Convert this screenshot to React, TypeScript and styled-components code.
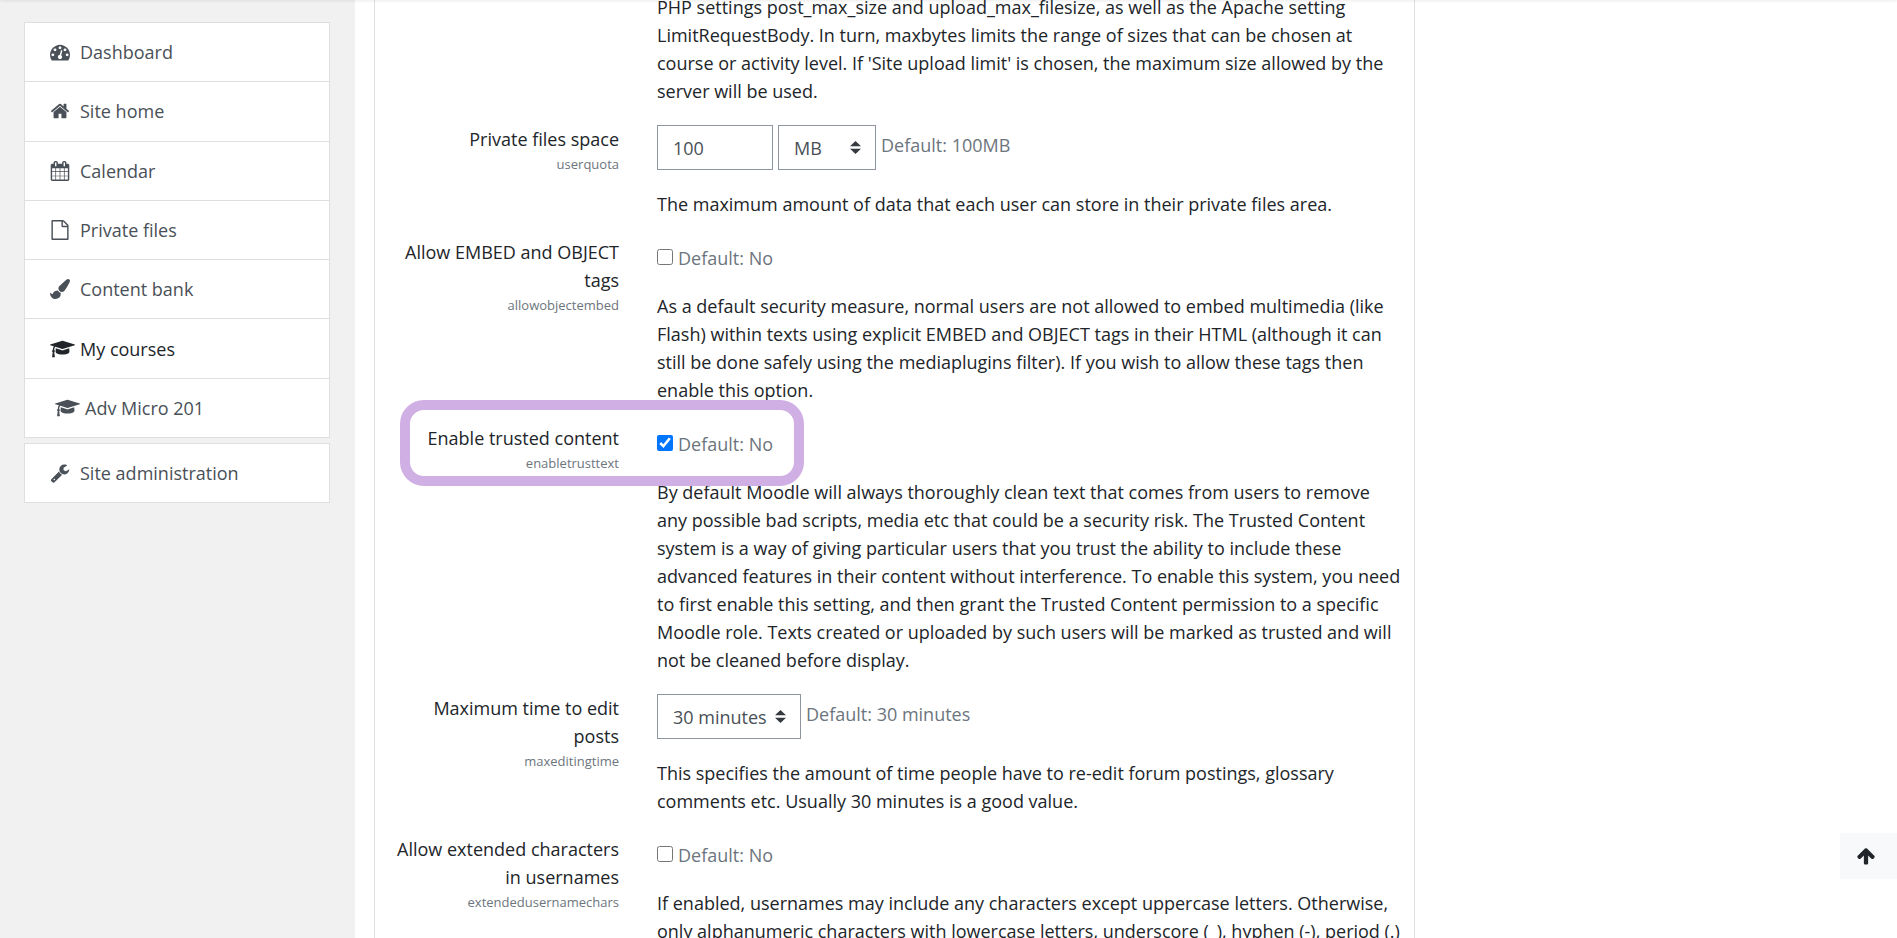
import React from "react";
import styled, { createGlobalStyle, css } from "styled-components";

const GlobalStyle = createGlobalStyle`
  *, *::before, *::after { box-sizing: border-box; }
  html, body { margin: 0; height: 100%; overflow: hidden; }
  body {
    background: #fff;
    color: #212529;
    font: 400 18px/28px "Open Sans", "Noto Sans", sans-serif;
  }
  p { margin: 0; }
`;

const Navbar = styled.header`
  position: fixed;
  z-index: 10;
  left: 0;
  right: 0;
  bottom: 100%;
  height: 60px;
  background: #fff;
  box-shadow: 0 1px 3px rgba(0, 0, 0, 0.08);
`;

const Page = styled.div`
  display: flex;
  height: 100vh;
  overflow: hidden;
`;

const Drawer = styled.aside`
  flex: 0 0 355px;
  padding: 22px 25px 0 24px;
  background: #f1f1f1;
`;

const NavList = styled.ul<{ $minHeight?: number }>`
  display: flex;
  flex-direction: column;
  min-height: ${(p) => p.$minHeight ?? 60}px;
  margin: 0 0 5px;
  padding: 0;
  list-style: none;
  background: #fff;
  border: 1px solid #dfdfdf;
`;

const NavItem = styled.li`
  display: flex;
  flex: 1 0 auto;
  & + & { border-top: 1px solid #dfdfdf; }
`;

const NavLink = styled.a<{ $heading?: boolean; $indent?: boolean }>`
  display: flex;
  flex: 1;
  align-items: center;
  padding: 15px 25px;
  padding-left: ${(p) => (p.$indent ? 30 : 25)}px;
  color: ${(p) => (p.$heading ? "#212529" : "#495057")};
  text-decoration: none;
`;

const IconSlot = styled.span`
  display: flex;
  flex: 0 0 25px;
  width: 25px;
  height: 20px;
  margin-right: 5px;
`;

const Main = styled.main`
  flex: 1;
  min-width: 0;
  padding: 0 482px 0 19px;
`;

const Card = styled.form`
  min-height: 100%;
  margin-top: -7px;
  padding: 0 5px 0 22px;
  border: 1px solid #dfdfdf;
  border-width: 0 1px;
`;

const FormRow = styled.div`
  position: relative;
  display: grid;
  grid-template-columns: 222px minmax(0, 1fr);
  column-gap: 38px;
  margin-bottom: 20px;
`;

const LabelCell = styled.div`
  text-align: right;
  white-space: pre;
`;

const Label = styled.label`
  display: block;
`;

const ShortName = styled.span`
  display: block;
  color: #6c757d;
  font-size: 13px;
  line-height: 22px;
`;

const Setting = styled.div`
  display: flex;
  align-items: flex-start;
  gap: 5px;
  min-height: 34px;
  margin-bottom: 20px;
`;

const DefaultInfo = styled.span`
  margin-top: 6px;
  color: #6c757d;
`;

const Description = styled.p`
  white-space: pre;
`;

const control = css`
  height: 45px;
  margin: 0;
  padding: 0 15px;
  color: #495057;
  font: inherit;
  background: #fff;
  border: 1px solid #8f959e;
  border-radius: 0;
`;

const TextInput = styled.input`
  ${control}
  width: 116px;
`;

const SelectWrap = styled.span<{ $width: number }>`
  position: relative;
  display: block;
  width: ${(p) => p.$width}px;
`;

const Select = styled.select`
  ${control}
  width: 100%;
  appearance: none;
`;

const Caret = styled.svg`
  position: absolute;
  top: 16px;
  right: 15px;
  width: 11px;
  height: 13px;
  fill: #343a40;
  pointer-events: none;
`;

const Checkbox = styled.input`
  width: 16px;
  height: 16px;
  margin: 11px 0 0;
  accent-color: #0075ff;
`;

const Highlight = styled.span`
  position: absolute;
  top: -24px;
  left: 3px;
  width: 404px;
  height: 86px;
  border: 10px solid #d0afe4;
  border-radius: 24px;
  pointer-events: none;
`;

const BackToTop = styled.button`
  position: fixed;
  right: 0;
  bottom: 59px;
  display: flex;
  align-items: center;
  justify-content: center;
  width: 57px;
  height: 46px;
  padding: 0 5px 0 0;
  color: #212529;
  background: #f8f9fa;
  border: 0;
`;

const icons = {
  dashboard: "M384 1152q0-53-37.5-90.5t-90.5-37.5-90.5 37.5-37.5 90.5 37.5 90.5 90.5 37.5 90.5-37.5 37.5-90.5zm192-448q0-53-37.5-90.5t-90.5-37.5-90.5 37.5-37.5 90.5 37.5 90.5 90.5 37.5 90.5-37.5 37.5-90.5zm428 481l101-382q6-26-7.5-48.5t-38.5-29.5-48 6.5-30 39.5l-101 382q-60 5-107 43.5t-63 98.5q-20 77 20 146t117 89 146-20 89-117q16-60-6-117t-72-91zm660-33q0-53-37.5-90.5t-90.5-37.5-90.5 37.5-37.5 90.5 37.5 90.5 90.5 37.5 90.5-37.5 37.5-90.5zm-640-640q0-53-37.5-90.5t-90.5-37.5-90.5 37.5-37.5 90.5 37.5 90.5 90.5 37.5 90.5-37.5 37.5-90.5zm448 192q0-53-37.5-90.5t-90.5-37.5-90.5 37.5-37.5 90.5 37.5 90.5 90.5 37.5 90.5-37.5 37.5-90.5zm320 448q0 261-141 483-19 29-54 29h-1402q-35 0-54-29-141-221-141-483 0-182 71-348t191-286 286-191 348-71 348 71 286 191 191 286 71 348z",
  home: "M1472 992v480q0 26-19 45t-45 19h-384v-384h-256v384h-384q-26 0-45-19t-19-45v-480q0-1 .5-3t.5-3l575-474 575 474q1 2 1 6zm223-69l-62 74q-8 9-21 11h-3q-13 0-21-7l-692-577-692 577q-12 8-24 7-13-2-21-11l-62-74q-8-10-7-23.5t11-21.5l719-599q32-26 76-26t76 26l244 204v-195q0-14 9-23t23-9h192q14 0 23 9t9 23v408l219 182q10 8 11 21.5t-7 23.5z",
  calendar: "M192 1664h288v-288h-288v288zm352 0h320v-288h-320v288zm-352-352h288v-320h-288v320zm352 0h320v-320h-320v320zm-352-384h288v-288h-288v288zm736 736h320v-288h-320v288zm-384-736h320v-288h-320v288zm768 736h288v-288h-288v288zm-384-352h320v-320h-320v320zm-352-864v-288q0-13-9.5-22.5t-22.5-9.5h-64q-13 0-22.5 9.5t-9.5 22.5v288q0 13 9.5 22.5t22.5 9.5h64q13 0 22.5-9.5t9.5-22.5zm736 864h288v-320h-288v320zm-384-384h320v-288h-320v288zm384 0h288v-288h-288v288zm32-480v-288q0-13-9.5-22.5t-22.5-9.5h-64q-13 0-22.5 9.5t-9.5 22.5v288q0 13 9.5 22.5t22.5 9.5h64q13 0 22.5-9.5t9.5-22.5zm384-64v1280q0 52-38 90t-90 38h-1408q-52 0-90-38t-38-90v-1280q0-52 38-90t90-38h128v-96q0-66 47-113t113-47h64q66 0 113 47t47 113v96h384v-96q0-66 47-113t113-47h64q66 0 113 47t47 113v96h128q52 0 90 38t38 90z",
  file: "M1596 380q28 28 48 76t20 88v1152q0 40-28 68t-68 28h-1344q-40 0-68-28t-28-68v-1600q0-40 28-68t68-28h896q40 0 88 20t76 48zm-444-244v376h376q-10-29-22-41l-313-313q-12-12-41-22zm384 1528v-1024h-416q-40 0-68-28t-28-68v-416h-768v1536h1280z",
  brush: "M1615 0q70 0 122.5 46.5t52.5 116.5q0 63-45 151-332 629-465 752-97 91-218 91-126 0-216.5-92.5t-90.5-219.5q0-128 92-212l638-579q59-54 130-54zm-909 1034q39 76 106.5 130t150.5 76l1 71q4 213-129.5 347t-348.5 134q-123 0-218-46.5t-152.5-127.5-86.5-183-29-220q7 5 41 30t62 44.5 59 36.5 46 17q41 0 55-37 25-66 57.5-112.5t69.5-76 88-47.5 103-25.5 125-10.5z",
  cap: "M1774 836l18 316q4 69-82 128t-235 93.5-323 34.5-323-34.5-235-93.5-82-128l18-316 574 181q22 7 48 7t48-7zm530-324q0 23-22 31l-1120 352q-4 1-10 1t-10-1l-652-206q-43 34-71 111.5t-34 178.5q63 36 63 109 0 69-58 107l58 433q2 14-8 25-9 11-24 11h-192q-15 0-24-11-10-11-8-25l58-433q-58-38-58-107 0-73 65-111 11-207 98-330l-333-104q-22-8-22-31t22-31l1120-352q4-1 10-1t10 1l1120 352q22 8 22 31z",
  wrench: "M448 1472q0-26-19-45t-45-19-45 19-19 45 19 45 45 19 45-19 19-45zm644-420l-682 682q-37 37-90 37-52 0-91-37l-106-108q-38-36-38-90 0-53 38-91l681-681q39 98 114.5 173.5t173.5 114.5zm634-435q0 39-23 106-47 134-164.5 217.5t-258.5 83.5q-185 0-316.5-131.5t-131.5-316.5 131.5-316.5 316.5-131.5q58 0 121.5 16.5t107.5 46.5q16 11 16 28t-16 28l-293 169v224l193 107q5-3 79-48.5t135.5-81 70.5-35.5q15 0 23.5 10t8.5 25z",
  arrowUp: "M1675 971q0 51-37 90l-75 75q-38 38-91 38-54 0-90-38l-294-293v704q0 52-37.5 84.5t-90.5 32.5h-128q-53 0-90.5-32.5t-37.5-84.5v-704l-294 293q-36 38-90 38t-90-38l-75-75q-38-38-38-90 0-53 38-91l651-651q35-37 90-37 54 0 91 37l651 651q37 39 37 91z",
};

type IconName = keyof typeof icons;

function Icon({ name }: { name: IconName }) {
  const wide = name === "cap";
  return (
    <svg
      width={wide ? 26 : 20}
      height={20}
      viewBox={wide ? "0 0 2304 1792" : "0 0 1792 1792"}
      fill="currentColor"
      aria-hidden="true"
    >
      <path d={icons[name]} />
    </svg>
  );
}

interface NavEntry {
  icon: IconName;
  text: string;
  heading?: boolean;
  indent?: boolean;
}

const siteNav: NavEntry[] = [
  { icon: "dashboard", text: "Dashboard" },
  { icon: "home", text: "Site home" },
  { icon: "calendar", text: "Calendar" },
  { icon: "file", text: "Private files" },
  { icon: "brush", text: "Content bank" },
  { icon: "cap", text: "My courses", heading: true },
  { icon: "cap", text: "Adv Micro 201", indent: true },
];

const adminNav: NavEntry[] = [{ icon: "wrench", text: "Site administration" }];

function Nav({ entries, minHeight }: { entries: NavEntry[]; minHeight?: number }) {
  return (
    <NavList $minHeight={minHeight}>
      {entries.map((e) => (
        <NavItem key={e.text}>
          <NavLink href="#" $heading={e.heading} $indent={e.indent}>
            <IconSlot>
              <Icon name={e.icon} />
            </IconSlot>
            {e.text}
          </NavLink>
        </NavItem>
      ))}
    </NavList>
  );
}

function SelectBox({ width, ...rest }: { width: number } & React.ComponentProps<"select">) {
  return (
    <SelectWrap $width={width}>
      <Select {...rest} />
      <Caret viewBox="0 0 4 5" preserveAspectRatio="none" aria-hidden="true">
        <path d="M2 0L0 2h4zm0 5L0 3h4z" />
      </Caret>
    </SelectWrap>
  );
}

interface SettingRowProps {
  name: string;
  label: string;
  defaultInfo: string;
  description: string;
  highlighted?: boolean;
  children: React.ReactNode;
}

function SettingRow({ name, label, defaultInfo, description, highlighted, children }: SettingRowProps) {
  return (
    <FormRow>
      <LabelCell>
        <Label htmlFor={name}>{label}</Label>
        <ShortName>{name}</ShortName>
      </LabelCell>
      <div>
        <Setting>
          {children}
          <DefaultInfo>Default: {defaultInfo}</DefaultInfo>
        </Setting>
        <Description>{description}</Description>
      </div>
      {highlighted && <Highlight />}
    </FormRow>
  );
}

export default function App() {
  return (
    <>
      <GlobalStyle />
      <Navbar />
      <Page>
        <Drawer>
          <nav>
            <Nav entries={siteNav} minHeight={416} />
            <Nav entries={adminNav} />
          </nav>
        </Drawer>
        <Main>
          <Card>
            <FormRow>
              <LabelCell />
              <Description>
                {`PHP settings post_max_size and upload_max_filesize, as well as the Apache setting
LimitRequestBody. In turn, maxbytes limits the range of sizes that can be chosen at
course or activity level. If 'Site upload limit' is chosen, the maximum size allowed by the
server will be used.`}
              </Description>
            </FormRow>
            <SettingRow
              name="userquota"
              label="Private files space"
              defaultInfo="100MB"
              description="The maximum amount of data that each user can store in their private files area."
            >
              <TextInput id="userquota" type="text" defaultValue="100" />
              <SelectBox width={98} aria-label="Unit" defaultValue="MB">
                <option>MB</option>
                <option>GB</option>
              </SelectBox>
            </SettingRow>
            <SettingRow
              name="allowobjectembed"
              label={"Allow EMBED and OBJECT\ntags"}
              defaultInfo="No"
              description={`As a default security measure, normal users are not allowed to embed multimedia (like
Flash) within texts using explicit EMBED and OBJECT tags in their HTML (although it can
still be done safely using the mediaplugins filter). If you wish to allow these tags then
enable this option.`}
            >
              <Checkbox id="allowobjectembed" type="checkbox" />
            </SettingRow>
            <SettingRow
              name="enabletrusttext"
              label="Enable trusted content"
              defaultInfo="No"
              highlighted
              description={`By default Moodle will always thoroughly clean text that comes from users to remove
any possible bad scripts, media etc that could be a security risk. The Trusted Content
system is a way of giving particular users that you trust the ability to include these
advanced features in their content without interference. To enable this system, you need
to first enable this setting, and then grant the Trusted Content permission to a specific
Moodle role. Texts created or uploaded by such users will be marked as trusted and will
not be cleaned before display.`}
            >
              <Checkbox id="enabletrusttext" type="checkbox" defaultChecked />
            </SettingRow>
            <SettingRow
              name="maxeditingtime"
              label={"Maximum time to edit\nposts"}
              defaultInfo="30 minutes"
              description={`This specifies the amount of time people have to re-edit forum postings, glossary
comments etc. Usually 30 minutes is a good value.`}
            >
              <SelectBox width={144} id="maxeditingtime" defaultValue="30 minutes">
                <option>30 minutes</option>
                <option>45 minutes</option>
              </SelectBox>
            </SettingRow>
            <SettingRow
              name="extendedusernamechars"
              label={"Allow extended characters\nin usernames"}
              defaultInfo="No"
              description={`If enabled, usernames may include any characters except uppercase letters. Otherwise,
only alphanumeric characters with lowercase letters, underscore (_), hyphen (-), period (.)`}
            >
              <Checkbox id="extendedusernamechars" type="checkbox" />
            </SettingRow>
          </Card>
        </Main>
      </Page>
      <BackToTop type="button" aria-label="Back to top">
        <Icon name="arrowUp" />
      </BackToTop>
    </>
  );
}
